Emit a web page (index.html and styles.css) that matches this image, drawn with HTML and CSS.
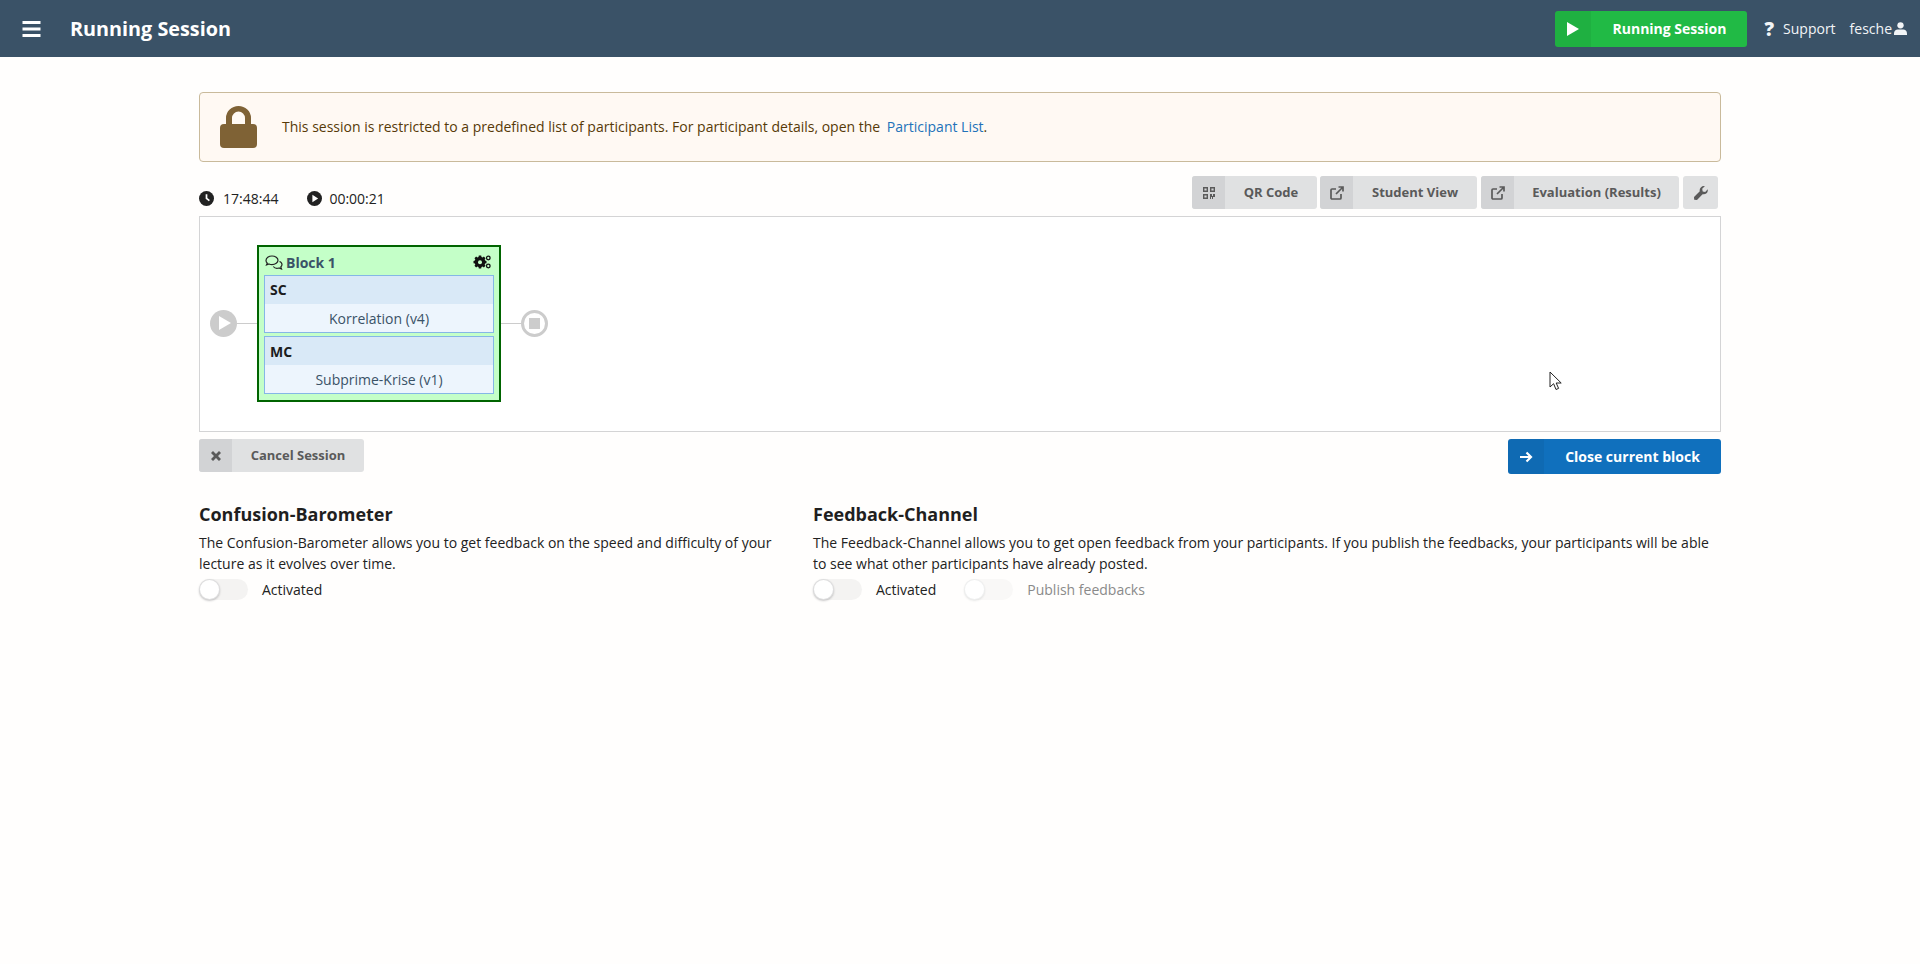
FILE: index.html
```html
<!DOCTYPE html>
<html lang="en">

<head>
    <meta charset="UTF-8" />
    <title>Running Session</title>
    <link rel="stylesheet" href="styles.css">
</head>

<body>
    <header class="navbar">
        <svg class="menu-icon" viewBox="0 0 18 16"><path d="M0 0h18v3H0zM0 6.5h18v3H0zM0 13h18v3H0z" /></svg>
        <h1 class="page-title">Running Session</h1>
        <div class="nav-right">
            <div class="btn btn-green btn-nav">
                <span class="btn-icon"><svg viewBox="0 0 14 16"><path d="M1 1l12 7-12 7z" /></svg></span>
                <span class="btn-text">Running Session</span>
            </div>
            <span class="nav-link nav-support"><b class="nav-q">?</b>Support</span>
            <span class="nav-link nav-user">fesche<svg viewBox="0 0 14 14"><circle cx="7" cy="3.6" r="3.4" /><path d="M0 14v-1.6C0 9.6 2 8 4 8h6c2 0 4 1.6 4 4.4V14z" /></svg></span>
        </div>
    </header>

    <main class="content">
        <div class="message">
            <svg class="lock-icon" viewBox="0 0 37 43">
                <path d="M6 18V12a12.5 12 0 0 1 25 0v6h-6V12a6.5 6.5 0 0 0-13 0v6z" />
                <rect x="0" y="18" width="37" height="24" rx="4" />
            </svg>
            <p>This session is restricted to a predefined list of participants. For participant details, open the <a href="#">Participant List</a>.</p>
        </div>

        <div class="toolbar">
            <div class="timers">
                <span class="timer"><svg viewBox="0 0 14 14"><circle cx="7" cy="7" r="7" /><path d="M6.2 3h1.6v3.6l2.4 1.8-1 1.2-3-2.3z" fill="#fff" /></svg>17:48:44</span>
                <span class="timer"><svg viewBox="0 0 14 14"><circle cx="7" cy="7" r="7" /><path d="M5 3.6l5.4 3.4L5 10.4z" fill="#fff" /></svg>00:00:21</span>
            </div>
            <div class="actions">
                <div class="btn btn-grey btn-qr">
                    <span class="btn-icon"><svg viewBox="0 0 12 12"><path d="M0 0h5v5H0zM1.4 1.4v2.2h2.2V1.4zM7 0h5v5H7zM8.4 1.4v2.2h2.2V1.4zM0 7h5v5H0zM1.4 8.4v2.2h2.2V8.4zM7 7h2v2h1V7h2v3h-2v2H9v-2H8v2H7z" fill-rule="evenodd" /></svg></span>
                    <span class="btn-text">QR Code</span>
                </div>
                <div class="btn btn-grey btn-student">
                    <span class="btn-icon"><svg class="stroke-icon" viewBox="0 0 14 14"><path d="M11 8v4a1 1 0 0 1-1 1H2a1 1 0 0 1-1-1V4a1 1 0 0 1 1-1h4M6 8l7-7M8.5 1H13v4.500" /></svg></span>
                    <span class="btn-text">Student View</span>
                </div>
                <div class="btn btn-grey btn-eval">
                    <span class="btn-icon"><svg class="stroke-icon" viewBox="0 0 14 14"><path d="M11 8v4a1 1 0 0 1-1 1H2a1 1 0 0 1-1-1V4a1 1 0 0 1 1-1h4M6 8l7-7M8.5 1H13v4.500" /></svg></span>
                    <span class="btn-text">Evaluation (Results)</span>
                </div>
                <div class="btn btn-grey btn-wrench">
                    <svg viewBox="0 0 14 14"><path d="M13.700 3.200c.3 1.500-.1 3-1.200 4-1 1-2.500 1.400-3.900 1L3 14 .2 13.700 0 11l5.800-5.700c-.4-1.400 0-2.900 1-3.900C7.900.3 9.400-.1 10.800.2L8.200 2.800l.5 2.600 2.500.5z" /></svg>
                </div>
            </div>
        </div>

        <div class="diagram">
            <span class="node node-start"><svg viewBox="0 0 12 14"><path d="M0 0l12 7-12 7z" /></svg></span>
            <span class="edge edge-in"></span>
            <section class="block">
                <div class="block-head">
                    <svg class="chat-icon" viewBox="0 0 18 15"><path d="M7 1C3.700 1 1 3 1 5.400c0 1 .5 2 1.300 2.700L1.500 10l2.500-1c1 .4 2 .6 3 .6 3.300 0 6-2 6-4.300S10.300 1 7 1zM14.500 6.500C16 7 17 8.200 17 9.600c0 1-.5 1.800-1.200 2.400l.7 2-2.500-1c-2.300.7-4.600 0-5.700-1.500" /></svg>
                    <span class="block-name">Block 1</span>
                    <svg class="gears-icon" viewBox="0 0 18 14">
                        <path d="M5.800 2.500h2.400l.3 1.400 1.100.5 1.300-.8 1.600 1.700-.8 1.200.4 1.100 1.400.3v2.300l-1.400.3-.4 1.100.8 1.200-1.600 1.600-1.300-.8-1.100.5-.3 1.400H5.800l-.3-1.400-1.100-.5-1.300.8-1.600-1.600.8-1.200-.4-1.100-1.400-.3V7.900l1.400-.3.4-1.100-.8-1.200 1.600-1.700 1.300.8 1.100-.5z" transform="translate(0 -2)" />
                        <circle cx="7" cy="7.200" r="2" fill="#c4ffc8" />
                        <circle cx="15.300" cy="3" r="1.800" fill="none" stroke="#111" stroke-width="1.300" />
                        <circle cx="15.300" cy="11" r="1.800" fill="none" stroke="#111" stroke-width="1.300" />
                    </svg>
                </div>
                <div class="question">
                    <div class="question-type">SC</div>
                    <div class="question-title">Korrelation (v4)</div>
                </div>
                <div class="question">
                    <div class="question-type">MC</div>
                    <div class="question-title">Subprime-Krise (v1)</div>
                </div>
            </section>
            <span class="edge edge-out"></span>
            <span class="node node-stop"><i></i></span>
            <svg class="cursor" viewBox="0 0 13 20"><path d="M1 1v15l3.600-3.300 2.400 5.800 2.600-1.100L7.200 12h5z" /></svg>
        </div>

        <div class="session-actions">
            <div class="btn btn-grey btn-cancel">
                <span class="btn-icon"><svg viewBox="0 0 10 10"><path d="M2 0L5 3 8 0l2 2-3 3 3 3-2 2-3-3-3 3-2-2 3-3-3-3z" /></svg></span>
                <span class="btn-text">Cancel Session</span>
            </div>
            <div class="btn btn-blue btn-close">
                <span class="btn-icon"><svg class="stroke-icon" viewBox="0 0 14 12"><path d="M1 6h11M7.500 1.500L12 6l-4.500 4.500" /></svg></span>
                <span class="btn-text">Close current block</span>
            </div>
        </div>

        <div class="features">
            <section class="feature feature-confusion">
                <h2>Confusion-Barometer</h2>
                <p>The Confusion-Barometer allows you to get feedback on the speed and difficulty of your lecture as it evolves over time.</p>
                <div class="toggles">
                    <label class="toggle"><span class="switch"></span>Activated</label>
                </div>
            </section>
            <section class="feature feature-channel">
                <h2>Feedback-Channel</h2>
                <p>The Feedback-Channel allows you to get open feedback from your participants. If you publish the feedbacks, your participants will be able to see what other participants have already posted.</p>
                <div class="toggles">
                    <label class="toggle"><span class="switch"></span>Activated</label>
                    <label class="toggle toggle-disabled"><span class="switch"></span>Publish feedbacks</label>
                </div>
            </section>
        </div>
    </main>
</body>

</html>
```

FILE: styles.css
```css
* {
    box-sizing: border-box;
}

body {
    margin: 0;
    background: #fffefd;
    color: #222;
    font-family: "Open Sans", sans-serif;
    font-size: 14px;
    height: 964px;
    overflow: hidden;
}

svg {
    display: block;
    fill: currentColor;
}

.stroke-icon {
    fill: none;
    stroke: currentColor;
    stroke-width: 1.7;
}

/* Navbar */
.navbar {
    display: flex;
    align-items: center;
    height: 57px;
    padding-left: 22px;
    background: #3a5267;
    color: #fff;
}

.menu-icon {
    width: 19px;
    height: 16px;
}

.page-title {
    margin: 0 0 0 29px;
    font-size: 19.8px;
    font-weight: 700;
}

.nav-right {
    display: flex;
    align-items: center;
    margin-left: auto;
}

.nav-link {
    display: flex;
    align-items: center;
    font-size: 14px;
    color: #f2f5f7;
}

.nav-support {
    margin-left: 17px;
}

.nav-q {
    font-size: 19px;
    font-weight: 800;
    margin-right: 9px;
}

.nav-user {
    gap: 2px;
    margin-left: 14px;
    margin-right: 13px;
}

.nav-user svg {
    width: 13px;
    height: 13px;
}

/* Buttons */
.btn {
    display: flex;
    align-items: stretch;
    border-radius: 3px;
    font-weight: 700;
    font-size: 13px;
    line-height: 1;
}

.btn-icon {
    display: flex;
    align-items: center;
    justify-content: center;
    flex: none;
    width: 33px;
    background: rgba(0, 0, 0, 0.05);
    border-radius: 3px 0 0 3px;
}

.btn-text {
    flex: 1;
    display: flex;
    align-items: center;
    justify-content: center;
}

.btn-grey {
    background: #e0e1e2;
    color: #5a5a5a;
}

.btn-grey .btn-icon {
    background: #d2d3d5;
}

.btn-green {
    background: #21ba45;
    color: #fff;
}

.btn-blue {
    background: #1070bd;
    color: #fff;
}

.btn-nav {
    width: 192px;
    height: 36px;
    font-size: 14px;
}

.btn-nav .btn-icon {
    width: 36px;
}

.btn-nav .btn-icon svg {
    width: 14px;
    height: 16px;
}

.btn-qr {
    width: 125px;
    height: 33px;
    margin-right: -1px;
}

.btn-student {
    width: 157px;
    height: 33px;
}

.btn-eval {
    width: 198px;
    height: 33px;
}

.btn-qr svg {
    width: 12px;
    height: 12px;
}

.btn-student svg,
.btn-eval svg {
    width: 14px;
    height: 14px;
}

.btn-wrench {
    width: 35px;
    height: 33px;
    align-items: center;
    justify-content: center;
}

.btn-wrench svg {
    width: 14px;
    height: 14px;
}

/* Page content */
.content {
    width: 1522px;
    margin: 35px auto 0 199px;
}

.message {
    display: flex;
    align-items: center;
    height: 70px;
    padding-left: 20px;
    background: #fff9f3;
    border: 1px solid #c9ba9b;
    border-radius: 4px;
    color: #573a08;
}

.lock-icon {
    width: 37px;
    height: 43px;
    flex: none;
    color: #7f6235;
}

.message p {
    margin: 0 0 0 25px;
    padding-bottom: 2px;
}

.message a {
    margin-left: 3px;
    color: #2272b9;
    text-decoration: none;
}

.toolbar {
    display: flex;
    align-items: flex-start;
    justify-content: space-between;
    height: 54px;
    padding-top: 14px;
    padding-right: 3px;
}

.timers {
    display: flex;
    gap: 29px;
    padding-top: 13px;
}

.timer {
    display: flex;
    align-items: center;
    gap: 9px;
}

.timer + .timer {
    gap: 7px;
}

.timer svg {
    width: 15px;
    height: 15px;
}

.actions {
    display: flex;
    gap: 4px;
}

/* Session flow */
.diagram {
    position: relative;
    display: flex;
    align-items: center;
    height: 216px;
    padding-left: 10px;
    padding-bottom: 2px;
    background: #fff;
    border: 1px solid #d4d4d5;
}

.node {
    display: flex;
    align-items: center;
    justify-content: center;
    width: 27px;
    height: 27px;
    border-radius: 50%;
    flex: none;
}

.node-start {
    background: #ccc;
    color: #fff;
}

.node-start svg {
    width: 12px;
    height: 14px;
    margin-left: 2px;
}

.node-stop {
    border: 3px solid #ccc;
}

.node-stop i {
    width: 11px;
    height: 11px;
    background: #ccc;
}

.edge {
    height: 1px;
    background: #ccc;
    flex: none;
}

.edge-in {
    width: 20px;
}

.edge-out {
    width: 20px;
}

.block {
    width: 244px;
    height: 157px;
    flex: none;
    padding: 3px 5px 4px;
    background: #c4ffc8;
    border: 2px solid #006400;
}

.block-head {
    display: flex;
    align-items: center;
    height: 25px;
    padding: 0 3px 0 1px;
    color: #3a5267;
    font-weight: 700;
}

.chat-icon {
    width: 18px;
    height: 15px;
    fill: none;
    stroke: #222;
    stroke-width: 1.200;
}

.block-name {
    margin-left: 3px;
}

.gears-icon {
    width: 18px;
    height: 14px;
    margin-left: auto;
    color: #111;
}

.question {
    height: 58px;
    margin-bottom: 3px;
    background: #edf5fd;
    border: 1px solid #85b7e6;
}

.question-type {
    display: flex;
    align-items: center;
    height: 28px;
    padding-left: 5px;
    background: #d9e9f7;
    color: #1b1c1d;
    font-weight: 700;
}

.question + .question .question-type {
    padding-top: 2px;
}

.question-title {
    display: flex;
    align-items: center;
    justify-content: center;
    height: 28px;
    padding-top: 2px;
    color: #3a5267;
}

.cursor {
    position: absolute;
    left: 1349px;
    top: 154px;
    width: 13px;
    height: 20px;
    fill: #fff;
    stroke: #222;
    stroke-width: 1;
}

.session-actions {
    display: flex;
    align-items: flex-start;
    justify-content: space-between;
    margin-top: 7px;
}

.btn-cancel {
    width: 165px;
    height: 33px;
}

.btn-cancel svg {
    width: 10px;
    height: 10px;
}

.btn-close {
    width: 213px;
    height: 35px;
    font-size: 14px;
}

.btn-close .btn-icon {
    width: 36px;
}

.btn-close svg {
    width: 14px;
    height: 12px;
    stroke-width: 2.2;
}

/* Feature sections */
.features {
    display: flex;
    margin-top: 28px;
}

.feature-confusion {
    width: 614px;
    flex: none;
}

.feature h2 {
    margin: 0;
    font-size: 18px;
    line-height: 24px;
    font-weight: 700;
    color: #1f1f1f;
}

.feature p {
    margin: 7px 0 0;
    line-height: 20.5px;
}

.toggles {
    display: flex;
    gap: 28px;
    margin-top: 5px;
}

.toggle {
    display: flex;
    align-items: center;
    gap: 14px;
}

.toggle-disabled {
    color: #8a8a8a;
}

.switch {
    position: relative;
    width: 49px;
    height: 21px;
    background: #f4f3f2;
    border-radius: 11px;
}

.switch::after {
    content: "";
    position: absolute;
    left: 0;
    top: 0;
    width: 21px;
    height: 21px;
    background: #fff;
    border-radius: 50%;
    box-shadow: 0 1px 2px rgba(34, 36, 38, 0.25), 0 0 0 1px rgba(34, 36, 38, 0.15) inset;
}

.toggle-disabled .switch {
    background: #f9f8f7;
}

.toggle-disabled .switch::after {
    box-shadow: 0 1px 2px rgba(34, 36, 38, 0.1), 0 0 0 1px rgba(34, 36, 38, 0.07) inset;
}
```
